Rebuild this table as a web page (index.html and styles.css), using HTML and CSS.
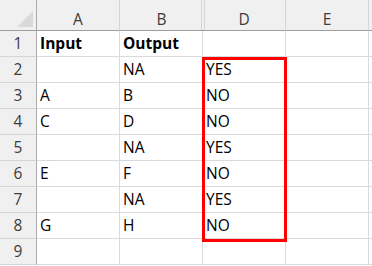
FILE: index.html
```html
<!DOCTYPE html>
<html>
<head>
<meta charset="utf-8">
<link rel="stylesheet" href="styles.css">
</head>
<body>
<div class="sheet">
  <div class="grid">
    <div class="corner"><svg class="tri" width="16" height="16" viewBox="0 0 16 16"><polygon points="16,0 16,16 0,16" fill="#d9d9d9"/></svg></div>
    <div class="colhead">A</div>
    <div class="colhead colb">B</div>
    <div class="colhead cold">D</div>
    <div class="colhead">E</div>
    <div class="colhead last"></div>

    <div class="rowhead">1</div><div class="cell bold">Input</div><div class="cell bold">Output</div><div class="cell"></div><div class="cell"></div><div class="cell last"></div>
    <div class="rowhead">2</div><div class="cell"></div><div class="cell">NA</div><div class="cell">YES</div><div class="cell"></div><div class="cell last"></div>
    <div class="rowhead">3</div><div class="cell">A</div><div class="cell">B</div><div class="cell">NO</div><div class="cell"></div><div class="cell last"></div>
    <div class="rowhead">4</div><div class="cell">C</div><div class="cell">D</div><div class="cell">NO</div><div class="cell"></div><div class="cell last"></div>
    <div class="rowhead">5</div><div class="cell"></div><div class="cell">NA</div><div class="cell">YES</div><div class="cell"></div><div class="cell last"></div>
    <div class="rowhead">6</div><div class="cell">E</div><div class="cell">F</div><div class="cell">NO</div><div class="cell"></div><div class="cell last"></div>
    <div class="rowhead">7</div><div class="cell"></div><div class="cell">NA</div><div class="cell">YES</div><div class="cell"></div><div class="cell last"></div>
    <div class="rowhead">8</div><div class="cell">G</div><div class="cell">H</div><div class="cell">NO</div><div class="cell"></div><div class="cell last"></div>
    <div class="rowhead">9</div><div class="cell"></div><div class="cell"></div><div class="cell"></div><div class="cell"></div><div class="cell last"></div>
  </div>
  <div class="highlight"></div>
</div>
</body>
</html>
```

FILE: styles.css
```css
html, body {
  margin: 0;
  padding: 0;
  background: #ffffff;
}
body {
  font-family: "Open Sans", "Liberation Sans", sans-serif;
  font-size: 15.5px;
  color: #000;
}
.sheet {
  position: relative;
  width: 372px;
  height: 266px;
  overflow: hidden;
}
.grid {
  display: grid;
  grid-template-columns: 37px 83px 83px 83px 83px 1fr;
  grid-template-rows: 31px repeat(9, 26px);
}
.grid > div {
  box-sizing: border-box;
  white-space: nowrap;
}
.corner {
  background: #f0f0f0;
  border-right: 1px solid #ababab;
  border-bottom: 1px solid #9e9e9e;
  display: flex;
  align-items: flex-end;
  justify-content: flex-end;
  padding: 0 3px 3px 0;
}
.tri {
  display: block;
}
.colhead {
  position: relative;
  background: #f0f0f0;
  border-right: 1px solid #d5d5d5;
  border-bottom: 1px solid #9e9e9e;
  text-align: center;
  color: #3c3c3c;
  padding-top: 9px;
  line-height: 21px;
}
.colhead.last {
  border-right: none;
}
.colhead.colb {
  border-right: none;
}
.colhead.colb::after {
  content: "";
  position: absolute;
  right: 1px;
  top: 0;
  bottom: 0;
  width: 1px;
  background: #d5d5d5;
}
.colhead.cold::before {
  content: "";
  position: absolute;
  left: 1px;
  top: 0;
  bottom: 0;
  width: 1px;
  background: #d5d5d5;
}
.rowhead {
  background: #f0f0f0;
  border-right: 1px solid #ababab;
  border-bottom: 1px solid #d5d5d5;
  text-align: center;
  color: #3c3c3c;
  line-height: 25px;
}
.cell {
  border-right: 1px solid #dadada;
  border-bottom: 1px solid #dadada;
  padding-left: 3px;
  line-height: 25px;
}
.cell.last {
  border-right: none;
}
.bold {
  font-weight: 700;
}
.highlight {
  position: absolute;
  left: 202px;
  top: 57px;
  width: 85px;
  height: 185px;
  box-sizing: border-box;
  border: 3px solid #ff0000;
  pointer-events: none;
}
```
